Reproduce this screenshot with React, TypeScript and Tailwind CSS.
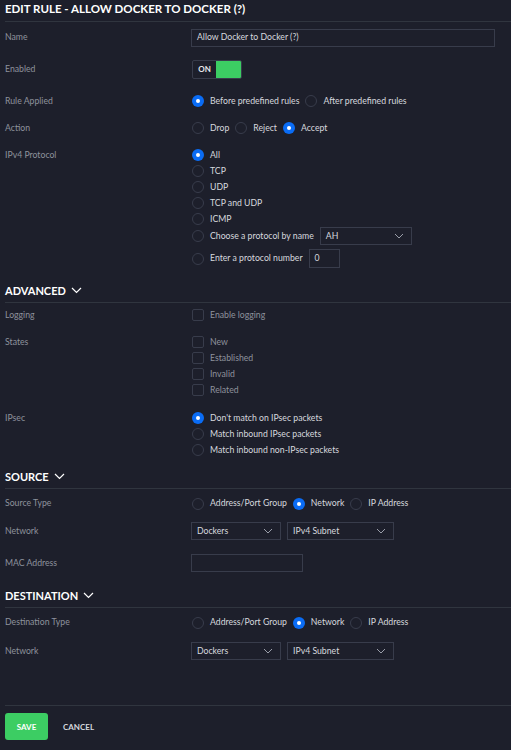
import React from "react";

const font = { fontFamily: "Lato, 'Noto Sans', sans-serif" };

function Chevron({ className = "" }: { className?: string }) {
  return (
    <svg width="10" height="6" viewBox="0 0 10 6" className={className}>
      <path d="M1 1 L5 5 L9 1" fill="none" stroke="#9a9ea9" strokeWidth="1" />
    </svg>
  );
}

function Radio({ checked = false }: { checked?: boolean }) {
  return checked ? (
    <span className="w-[12px] h-[12px] rounded-full bg-[#0a6cf5] flex items-center justify-center shrink-0">
      <span className="w-[4px] h-[4px] rounded-full bg-white" />
    </span>
  ) : (
    <span className="w-[12px] h-[12px] rounded-full border border-[#383c4b] shrink-0" />
  );
}

function RadioOpt({ label, checked = false }: { label: string; checked?: boolean }) {
  return (
    <span className="flex items-center gap-[6px]">
      <Radio checked={checked} />
      <span className="text-[#d6d8de]">{label}</span>
    </span>
  );
}

function Check({ label }: { label: string }) {
  return (
    <div className="h-[16px] flex items-center gap-[6px]">
      <span className="w-[12px] h-[12px] rounded-[2px] border border-[#383c4b] shrink-0" />
      <span className="text-[#8e929d]">{label}</span>
    </div>
  );
}

function Select({ value, w }: { value: string; w: string }) {
  return (
    <div className={`${w} h-[18px] border border-[#383c4b] flex items-center justify-between pl-[5px] pr-[7px] text-[#d6d8de]`}>
      <span>{value}</span>
      <Chevron />
    </div>
  );
}

function Label({ children }: { children: React.ReactNode }) {
  return <div className="w-[186px] shrink-0 text-[#8e929d]">{children}</div>;
}

function Header({ title }: { title: string }) {
  return (
    <>
      <div className="h-[20px] flex items-center gap-[5px] text-white font-bold text-[11px] pl-[5px]">
        <span>{title}</span>
        <svg width="11" height="7" viewBox="0 0 11 7">
          <path d="M1 1 L5.5 5.5 L10 1" fill="none" stroke="#ffffff" strokeWidth="1.2" />
        </svg>
      </div>
      <div className="ml-[5px] mt-[2px] h-[1px] bg-[#30353f]" />
    </>
  );
}

export default function App() {
  return (
    <div style={font} className="min-h-screen w-[511px] bg-[#1d1f2b] text-[8.7px] leading-none pb-[9px]">
      {/* Title */}
      <div className="h-[18px] flex items-center text-white font-bold text-[11.5px] pl-[5px]">
        EDIT RULE - ALLOW DOCKER TO DOCKER (?)
      </div>
      <div className="ml-[5px] mt-[3px] h-[1px] bg-[#30353f]" />

      <div className="pl-[5px]">
        {/* Name */}
        <div className="h-[31px] flex items-center">
          <Label>Name</Label>
          <div className="w-[304px] h-[18px] border border-[#383c4b] flex items-center pl-[5px] text-[#d6d8de]">
            Allow Docker to Docker (?)
          </div>
        </div>
        {/* Enabled */}
        <div className="h-[32px] flex items-center">
          <Label>Enabled</Label>
          <div className="ml-[1px] w-[50px] h-[19px] border border-[#383c4b] rounded-[2px] flex">
            <div className="w-[23px] flex items-center justify-center text-[#e6e7eb] text-[8px] font-bold">ON</div>
            <div className="flex-1 bg-[#3ccd63] rounded-r-[1px]" />
          </div>
        </div>
        {/* Rule Applied */}
        <div className="h-[32px] flex items-center">
          <Label>Rule Applied</Label>
          <div className="ml-[1px] flex items-center gap-[6px]">
            <RadioOpt label="Before predefined rules" checked />
            <RadioOpt label="After predefined rules" />
          </div>
        </div>
        {/* Action */}
        <div className="h-[22px] flex items-center">
          <Label>Action</Label>
          <div className="ml-[1px] flex items-center gap-[6px]">
            <RadioOpt label="Drop" />
            <RadioOpt label="Reject" />
            <RadioOpt label="Accept" checked />
          </div>
        </div>
        {/* IPv4 */}
        <div className="mt-[8px] flex items-start">
          <div className="h-[16px] flex items-center">
            <Label>IPv4 Protocol</Label>
          </div>
          <div className="ml-[1px] flex flex-col">
            <div className="h-[16px] flex items-center"><RadioOpt label="All" checked /></div>
            <div className="h-[16px] flex items-center"><RadioOpt label="TCP" /></div>
            <div className="h-[16px] flex items-center"><RadioOpt label="UDP" /></div>
            <div className="h-[16px] flex items-center"><RadioOpt label="TCP and UDP" /></div>
            <div className="h-[16px] flex items-center"><RadioOpt label="ICMP" /></div>
            <div className="h-[18px] flex items-center gap-[6px]">
              <RadioOpt label="Choose a protocol by name" />
              <Select value="AH" w="w-[92px]" />
            </div>
            <div className="mt-[4px] h-[19px] flex items-center gap-[6px]">
              <RadioOpt label="Enter a protocol number" />
              <div className="w-[31px] h-[19px] border border-[#383c4b] flex items-center pl-[5px] text-[#d6d8de]">0</div>
            </div>
          </div>
        </div>
      </div>

      {/* ADVANCED */}
      <div className="mt-[12px]">
        <Header title="ADVANCED" />
      </div>
      <div className="pl-[5px]">
        <div className="h-[24px] flex items-center">
          <Label>Logging</Label>
          <div className="ml-[1px]"><Check label="Enable logging" /></div>
        </div>
        <div className="mt-[7px] flex items-start">
          <div className="h-[16px] flex items-center"><Label>States</Label></div>
          <div className="ml-[1px] flex flex-col">
            <Check label="New" />
            <Check label="Established" />
            <Check label="Invalid" />
            <Check label="Related" />
          </div>
        </div>
        <div className="mt-[12px] flex items-start">
          <div className="h-[16px] flex items-center"><Label>IPsec</Label></div>
          <div className="ml-[1px] flex flex-col">
            <div className="h-[16px] flex items-center"><RadioOpt label="Don't match on IPsec packets" checked /></div>
            <div className="h-[16px] flex items-center"><RadioOpt label="Match inbound IPsec packets" /></div>
            <div className="h-[16px] flex items-center"><RadioOpt label="Match inbound non-IPsec packets" /></div>
          </div>
        </div>
      </div>

      {/* SOURCE */}
      <div className="mt-[8px]">
        <Header title="SOURCE" />
      </div>
      <div className="pl-[5px]">
        <div className="h-[29px] flex items-center">
          <Label>Source Type</Label>
          <div className="ml-[1px] flex items-center gap-[6px]">
            <RadioOpt label="Address/Port Group" />
            <RadioOpt label="Network" checked />
            <RadioOpt label="IP Address" />
          </div>
        </div>
        <div className="h-[26px] flex items-center">
          <Label>Network</Label>
          <div className="flex gap-[6px]">
            <Select value="Dockers" w="w-[90px]" />
            <Select value="IPv4 Subnet" w="w-[107px]" />
          </div>
        </div>
        <div className="h-[38px] flex items-center">
          <Label>MAC Address</Label>
          <div className="w-[112px] h-[18px] border border-[#383c4b]" />
        </div>
      </div>

      {/* DESTINATION */}
      <div className="mt-[3px]">
        <Header title="DESTINATION" />
      </div>
      <div className="pl-[5px]">
        <div className="h-[29px] flex items-center">
          <Label>Destination Type</Label>
          <div className="ml-[1px] flex items-center gap-[6px]">
            <RadioOpt label="Address/Port Group" />
            <RadioOpt label="Network" checked />
            <RadioOpt label="IP Address" />
          </div>
        </div>
        <div className="h-[28px] flex items-center">
          <Label>Network</Label>
          <div className="flex gap-[6px]">
            <Select value="Dockers" w="w-[90px]" />
            <Select value="IPv4 Subnet" w="w-[107px]" />
          </div>
        </div>
      </div>

      <div className="ml-[5px] mt-[40px] h-[1px] bg-[#30353f]" />
      <div className="pl-[5px] mt-[7px] flex items-center gap-[15px]">
        <div className="w-[43px] h-[27px] rounded-[3px] bg-[#3ccd63] flex items-center justify-center text-white font-bold text-[8px]">
          SAVE
        </div>
        <div className="text-[#d6d8de] font-bold text-[8px]">CANCEL</div>
      </div>
    </div>
  );
}
